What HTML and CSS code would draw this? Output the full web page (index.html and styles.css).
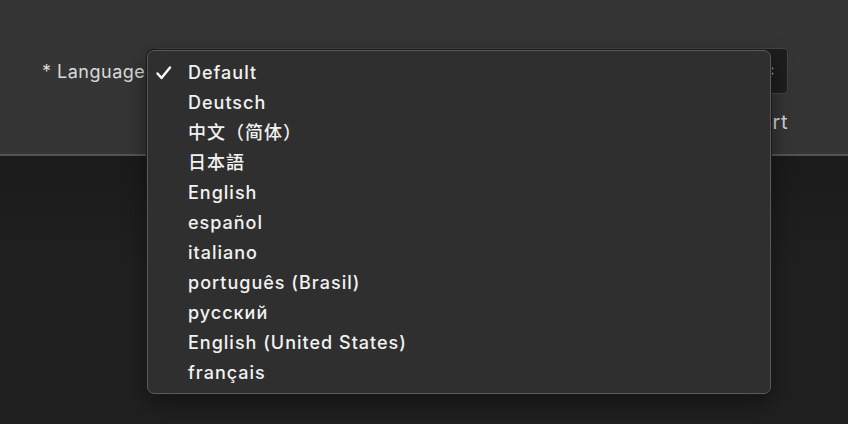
FILE: index.html
```html
<!DOCTYPE html>
<html lang="en">
<head>
    <meta charset="UTF-8">
    <title>Settings</title>
    <link rel="stylesheet" href="styles.css">
</head>
<body>
    <div class="panel">
        <div class="form-row">
            <label class="field-label">* Language</label>
            <div class="select-box">
                <svg class="select-arrows" width="10" height="16" viewBox="0 0 10 16">
                    <path d="M2 6 L5 3 L8 6 M2 10 L5 13 L8 10" fill="none" stroke="#bbb" stroke-width="1.5"/>
                </svg>
            </div>
        </div>
        <div class="actions">
            <span class="action-link">Restart</span>
        </div>
    </div>

    <!-- open dropdown menu -->
    <ul class="menu">
        <li class="menu-item checked">
            <svg class="check" width="18" height="16" viewBox="0 0 18 16">
                <path d="M2.5 8.5 L6.5 13 L15 2.5" fill="none" stroke="#fff" stroke-width="2.4" stroke-linecap="round" stroke-linejoin="round"/>
            </svg>
            Default
        </li>
        <li class="menu-item">Deutsch</li>
        <li class="menu-item">中文（简体）</li>
        <li class="menu-item">日本語</li>
        <li class="menu-item">English</li>
        <li class="menu-item">español</li>
        <li class="menu-item">italiano</li>
        <li class="menu-item">português (Brasil)</li>
        <li class="menu-item">русский</li>
        <li class="menu-item">English (United States)</li>
        <li class="menu-item">français</li>
    </ul>
</body>
</html>
```

FILE: styles.css
```css
body {
    margin: 0;
    padding: 0;
    height: 424px;
    overflow: hidden;
    font-family: Inter, "Noto Sans CJK SC", sans-serif;
    background: linear-gradient(to bottom, #111111 0px, #1a1a1a 140px, #202020 268px);
    position: relative;
}
.panel {
    height: 156px;
    box-sizing: border-box;
    background-color: #353535;
    border-bottom: 2px solid #555555;
    padding: 48px 60px 0 42px;
}
.form-row {
    display: flex;
    align-items: center;
    gap: 6px;
}
.field-label {
    font-size: 18px;
    letter-spacing: 0.5px;
    color: #dadada;
    width: 107px;
    white-space: nowrap;
}
.select-box {
    flex: 1;
    height: 46px;
    box-sizing: border-box;
    background-color: #1e1e1e;
    border: 1px solid #444444;
    border-radius: 4px;
    display: flex;
    align-items: center;
    justify-content: flex-end;
    padding: 0 12px;
}
.actions {
    display: flex;
    justify-content: flex-end;
    margin-top: 16px;
}
.action-link {
    font-size: 20px;
    letter-spacing: 0.5px;
    color: #d4d4d4;
}
.menu {
    position: absolute;
    left: 147px;
    top: 50px;
    width: 624px;
    height: 344px;
    box-sizing: border-box;
    margin: 0;
    padding: 7px 0;
    list-style: none;
    background-color: #2f2f2f;
    border: 1px solid #585858;
    border-radius: 7px;
    box-shadow: 0 0 0 1px #1a1a1a, 0 8px 24px rgba(0, 0, 0, 0.45);
}
.menu-item {
    position: relative;
    height: 30px;
    line-height: 30px;
    padding-left: 40px;
    font-size: 18px;
    font-weight: 500;
    letter-spacing: 1px;
    color: #f2f2f2;
}
.check {
    position: absolute;
    left: 7px;
    top: 7px;
}
```
